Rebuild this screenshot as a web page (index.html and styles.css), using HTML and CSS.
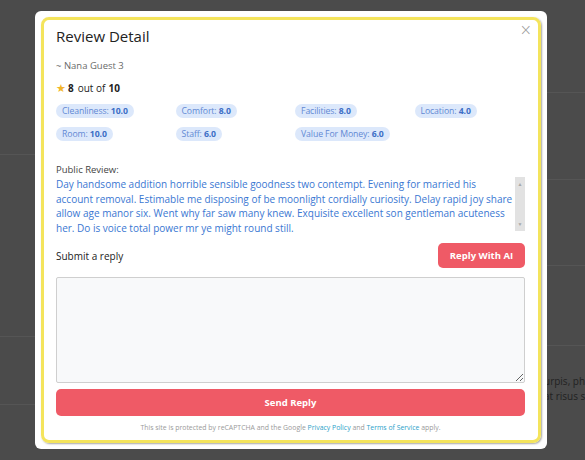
FILE: index.html
```html
<!DOCTYPE html>
<html>
<head>
<meta charset="utf-8">
<link rel="stylesheet" href="styles.css">
</head>
<body>
<div class="page">
  <div class="col col-left">
    <div class="row r1"></div>
    <div class="row r2"></div>
    <div class="row r3"></div>
  </div>
  <div class="col col-mid"></div>
  <div class="col col-right">
    <div class="row q1"></div>
    <div class="row q2"></div>
    <div class="row q3"></div>
    <div class="row q4"></div>
    <div class="bg-text">urpis, ph<br>at risus s</div>
  </div>
</div>

<div class="modal">
  <div class="dialog">
    <button class="close">&times;</button>
    <h2 class="title">Review Detail</h2>
    <div class="guest">~ Nana Guest 3</div>
    <div class="rating"><span class="star">&#9733;</span><b>8</b><span class="outof">out of</span><b>10</b></div>
    <div class="chips">
      <div><span class="chip">Cleanliness: <b>10.0</b></span></div>
      <div><span class="chip">Comfort: <b>8.0</b></span></div>
      <div><span class="chip">Facilities: <b>8.0</b></span></div>
      <div><span class="chip">Location: <b>4.0</b></span></div>
      <div><span class="chip">Room: <b>10.0</b></span></div>
      <div><span class="chip">Staff: <b>6.0</b></span></div>
      <div><span class="chip">Value For Money: <b>6.0</b></span></div>
    </div>
    <div class="label">Public Review:</div>
    <div class="review">
      <div class="review-text">Day handsome addition horrible sensible goodness two contempt. Evening for married his account removal. Estimable me disposing of be moonlight cordially curiosity. Delay rapid joy share allow age manor six. Went why far saw many knew. Exquisite excellent son gentleman acuteness her. Do is voice total power mr ye might round still.</div>
      <div class="scrollbar"><span class="arr">&#9650;</span><span class="arr">&#9660;</span></div>
    </div>
    <div class="reply-head">
      <span class="submit">Submit a reply</span>
      <button class="btn btn-ai">Reply With AI</button>
    </div>
    <textarea class="reply-box"></textarea>
    <button class="btn btn-send">Send Reply</button>
    <div class="legal">This site is protected by reCAPTCHA and the Google <a href="#">Privacy Policy</a> and <a href="#">Terms of Service</a> apply.</div>
  </div>
</div>
</body>
</html>
```
FILE: styles.css
```css
* { box-sizing: border-box; }
html, body {
  margin: 0;
  padding: 0;
  width: 585px;
  height: 460px;
  overflow: hidden;
  background: #4b4b4b;
  font-family: "Open Sans", "Noto Sans", sans-serif;
}
.page {
  display: grid;
  grid-template-columns: 35px 1fr 38px;
  height: 460px;
}
.col { display: flex; flex-direction: column; }
.row { border-bottom: 1px solid #555; flex-shrink: 0; }
.r1 { height: 155px; }
.r2 { height: 182px; }
.r3 { height: 68px; }
.q1 { height: 93px; }
.q2 { height: 87px; }
.q3 { height: 86px; }
.q4 { height: 80px; }
.bg-text {
  margin-top: 28px;
  margin-left: -3px;
  font-size: 10px;
  line-height: 15px;
  color: #222;
  white-space: nowrap;
  overflow: hidden;
}

.modal {
  position: absolute;
  left: 35px;
  top: 11px;
  width: 512px;
  height: 438px;
  background: #fff;
  border-radius: 6px;
  padding: 6px;
}
.dialog {
  position: relative;
  height: 100%;
  border: 3px solid #f4e45c;
  border-radius: 8px;
  box-shadow: 1px 1px 2px rgba(0,0,0,0.35);
  padding: 6px 13px 0 12px;
  display: flex;
  flex-direction: column;
}
.dialog > * { flex-shrink: 0; }
.close {
  position: absolute;
  right: 6px;
  top: 2px;
  border: 0;
  background: none;
  padding: 0;
  font-size: 15px;
  line-height: 16px;
  color: #9a9a9a;
  font-family: "DejaVu Sans", sans-serif;
  font-weight: 300;
}
.title {
  margin: 0;
  font-size: 15px;
  line-height: 20px;
  font-weight: 500;
  color: #222;
}
.guest {
  margin-top: 13px;
  font-size: 9.5px;
  line-height: 14px;
  color: #6a6a6a;
}
.rating {
  margin-top: 8px;
  font-size: 10px;
  line-height: 14px;
  color: #222;
  display: flex;
  align-items: center;
}
.rating b { font-weight: 700; }
.star { color: #f2b52a; font-size: 11px; margin-right: 2px; }
.outof { margin: 0 3px 0 4px; }
.chips {
  margin-top: 9px;
  display: grid;
  grid-template-columns: repeat(4, 119.5px);
  row-gap: 9px;
}
.chips > div { display: flex; }
.chip {
  display: block;
  height: 14px;
  line-height: 14px;
  padding: 0 6px;
  border-radius: 7px;
  background: #dce8fb;
  color: #6289d4;
  font-size: 8.7px;
  white-space: nowrap;
  letter-spacing: -0.1px;
}
.chip b { color: #3d6ec6; font-weight: 700; }
.label {
  margin-top: 22px;
  font-size: 9.5px;
  line-height: 14px;
  color: #444;
}
.review {
  display: flex;
  height: 54px;
}
.review-text {
  width: 459px;
  height: 60px;
  overflow: hidden;
  font-size: 10px;
  line-height: 14.7px;
  color: #3a77d2;
}
.scrollbar {
  width: 10px;
  background: #e2e2e2;
  display: flex;
  flex-direction: column;
  justify-content: space-between;
  align-items: center;
  padding: 4px 0;
}
.arr { font-size: 5px; line-height: 6px; color: #a8a8a8; }
.reply-head {
  margin-top: 12px;
  display: flex;
  justify-content: space-between;
  align-items: center;
}
.submit { font-size: 10px; color: #222; }
.btn {
  border: 0;
  background: #ef5a66;
  color: #fff;
  font-family: inherit;
  font-weight: 700;
  font-size: 9.5px;
  border-radius: 5px;
}
.btn-ai { width: 87px; height: 25px; }
.reply-box {
  display: block;
  margin-top: 9px;
  width: 469px;
  height: 106px;
  border: 1px solid #cfcfcf;
  border-radius: 2px;
  background: #f8f9fa;
  resize: vertical;
}
.btn-send {
  margin-top: 6px;
  width: 469px;
  height: 27px;
}
.legal {
  margin-top: 7px;
  text-align: center;
  font-size: 6.9px;
  line-height: 10px;
  color: #9a9a9a;
}
.legal a { color: #2d9fc9; text-decoration: none; }
```
